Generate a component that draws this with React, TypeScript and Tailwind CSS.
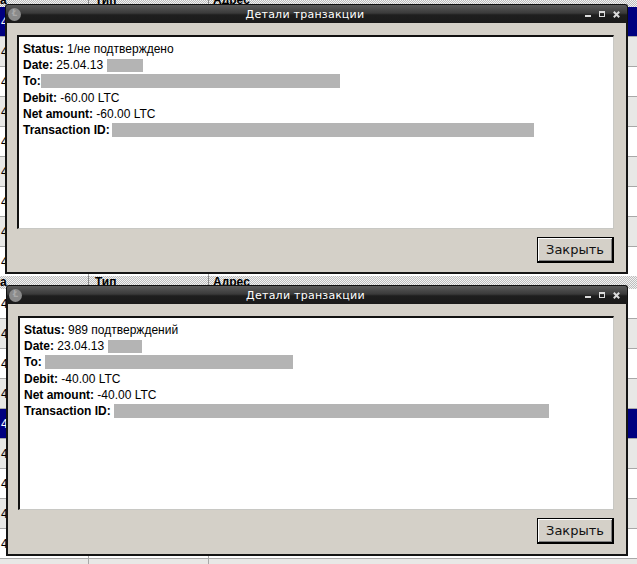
import React from "react";

const checker =
  "bg-[repeating-conic-gradient(#bdbdbd_0%_25%,#f2f2f2_0%_50%)] bg-[length:2px_2px]";

function BgTable({ selected, rows }: { selected: number; rows: number }) {
  return (
    <div className="flex flex-col">
      <div className={`flex h-[13px] ${checker} text-[12px] font-bold leading-[13px] text-black`}>
        <div className="w-[89px] border-r border-[#8a8a8a] pl-[0px] overflow-hidden whitespace-nowrap">а</div>
        <div className="w-[120px] border-r border-[#8a8a8a] pl-[6px]">Тип</div>
        <div className="flex-1 pl-[4px]">Адрес</div>
      </div>
      {Array.from({ length: rows }).map((_, i) => {
        const bg = i === selected ? "bg-[#000080] text-white" : i % 2 === 1 ? "bg-[#e8e8e6] text-black" : "bg-white text-black";
        return (
          <div key={i} className={`flex h-[30px] border-b border-[#a8a8a8] ${bg} text-[12px] leading-[30px]`}>
            <div className="w-[89px] border-r border-[#a8a8a8] pl-[1px] whitespace-nowrap overflow-hidden">4</div>
            <div className="w-[120px] border-r border-[#a8a8a8]"></div>
            <div className="flex-1"></div>
          </div>
        );
      })}
    </div>
  );
}

function Redact({ w, h = 14, ml = 0 }: { w: number; h?: number; ml?: number }) {
  return (
    <span
      className="inline-block bg-[#b4b4b4] align-middle -mt-[2px]"
      style={{ width: w, height: h, marginLeft: ml }}
    />
  );
}

function TitleButtons() {
  return (
    <div className="flex items-center gap-[8px] pr-[7px]">
      <div className="w-[6px] h-[6px] flex items-end">
        <div className="w-[6px] h-[2px] bg-[#dcdcdc]" />
      </div>
      <div className="w-[6px] h-[6px] border border-[#dcdcdc] border-t-2" />
      <svg width="7" height="7" viewBox="0 0 7 7">
        <path d="M0.8 0.8 L6.2 6.2 M6.2 0.8 L0.8 6.2" stroke="#dcdcdc" strokeWidth="2" />
      </svg>
    </div>
  );
}

type Data = {
  status: string;
  date: string;
  dateBox: [number, number];
  toBox: [number, number];
  debit: string;
  txBox: [number, number];
};

function Dialog({ d }: { d: Data }) {
  return (
    <div className="flex flex-col w-full h-full">
      <div className="flex items-center h-[19px] bg-[linear-gradient(#5a5a5a_0%,#3a3a3a_45%,#1e1e1e_55%,#1a1a1a_100%)] rounded-t-[3px] border-x border-t border-[#101010]">
        <div className="w-[13px] h-[13px] rounded-full bg-[#8a8a8a] ml-[2px] flex items-center justify-center">
          <span className="text-[8px] leading-none text-[#a8a8a8] font-bold font-['DejaVu_Sans',sans-serif]">Ł</span>
        </div>
        <div className="flex-1 text-center text-white text-[11px] tracking-[0.25px] font-['DejaVu_Sans',sans-serif] leading-[19px] pl-[4px]">
          Детали транзакции
        </div>
        <TitleButtons />
      </div>
      <div className="flex-1 flex flex-col bg-[#d4d0c8] border-x-2 border-b-2 border-[#141414] pt-[12px] pl-[10px] pr-[12px] pb-[9px]">
        <div className="h-[194px] bg-white border-t-2 border-l-2 border-t-[#111] border-l-[#111] border-b border-r border-b-[#c8c8c4] border-r-[#c8c8c4] pl-[4px] pt-[4px] font-['Liberation_Sans',Arial,sans-serif] text-[12px] leading-[16.2px] text-black">
          <div className="whitespace-nowrap"><b>Status:</b> {d.status}</div>
          <div className="whitespace-nowrap"><b>Date:</b> {d.date}<Redact w={d.dateBox[1]} h={13} ml={d.dateBox[0]} /></div>
          <div className="whitespace-nowrap"><b>To:</b><Redact w={d.toBox[1]} ml={d.toBox[0]} /></div>
          <div className="whitespace-nowrap"><b>Debit:</b> {d.debit} LTC</div>
          <div className="whitespace-nowrap"><b>Net amount:</b> {d.debit} LTC</div>
          <div className="whitespace-nowrap"><b>Transaction ID:</b><Redact w={d.txBox[1]} ml={d.txBox[0]} /></div>
        </div>
        <div className="flex justify-end mt-[8px]">
          <button className="w-[77px] h-[26px] bg-[#d4d0c8] border border-black border-r-2 border-b-2 shadow-[inset_1px_1px_0_#ffffff,inset_-1px_-1px_0_#808080] text-[13px] text-[#111] font-['DejaVu_Sans',sans-serif] leading-none">
            Закрыть
          </button>
        </div>
      </div>
    </div>
  );
}

export default function App() {
  const top: Data = {
    status: "1/не подтверждено",
    date: "25.04.13",
    dateBox: [4, 36],
    toBox: [0, 299],
    debit: "-60.00",
    txBox: [2, 422],
  };
  const bottom: Data = {
    status: "989 подтверждений",
    date: "23.04.13",
    dateBox: [4, 34],
    toBox: [3, 248],
    debit: "-40.00",
    txBox: [3, 435],
  };
  return (
    <div className="w-[637px] h-[564px] overflow-hidden bg-white font-['Liberation_Sans',Arial,sans-serif]">
      <div className="relative h-[276px] overflow-hidden">
        <div className="-mt-[6px]">
          <BgTable selected={0} rows={10} />
        </div>
        <div className="absolute left-[5px] top-[4px] w-[623px] h-[270px]">
          <Dialog d={top} />
        </div>
      </div>
      <div className="relative h-[288px] overflow-hidden">
        <BgTable selected={4} rows={10} />
        <div className="absolute left-[6px] top-[9px] w-[622px] h-[271px]">
          <Dialog d={bottom} />
        </div>
      </div>
    </div>
  );
}
